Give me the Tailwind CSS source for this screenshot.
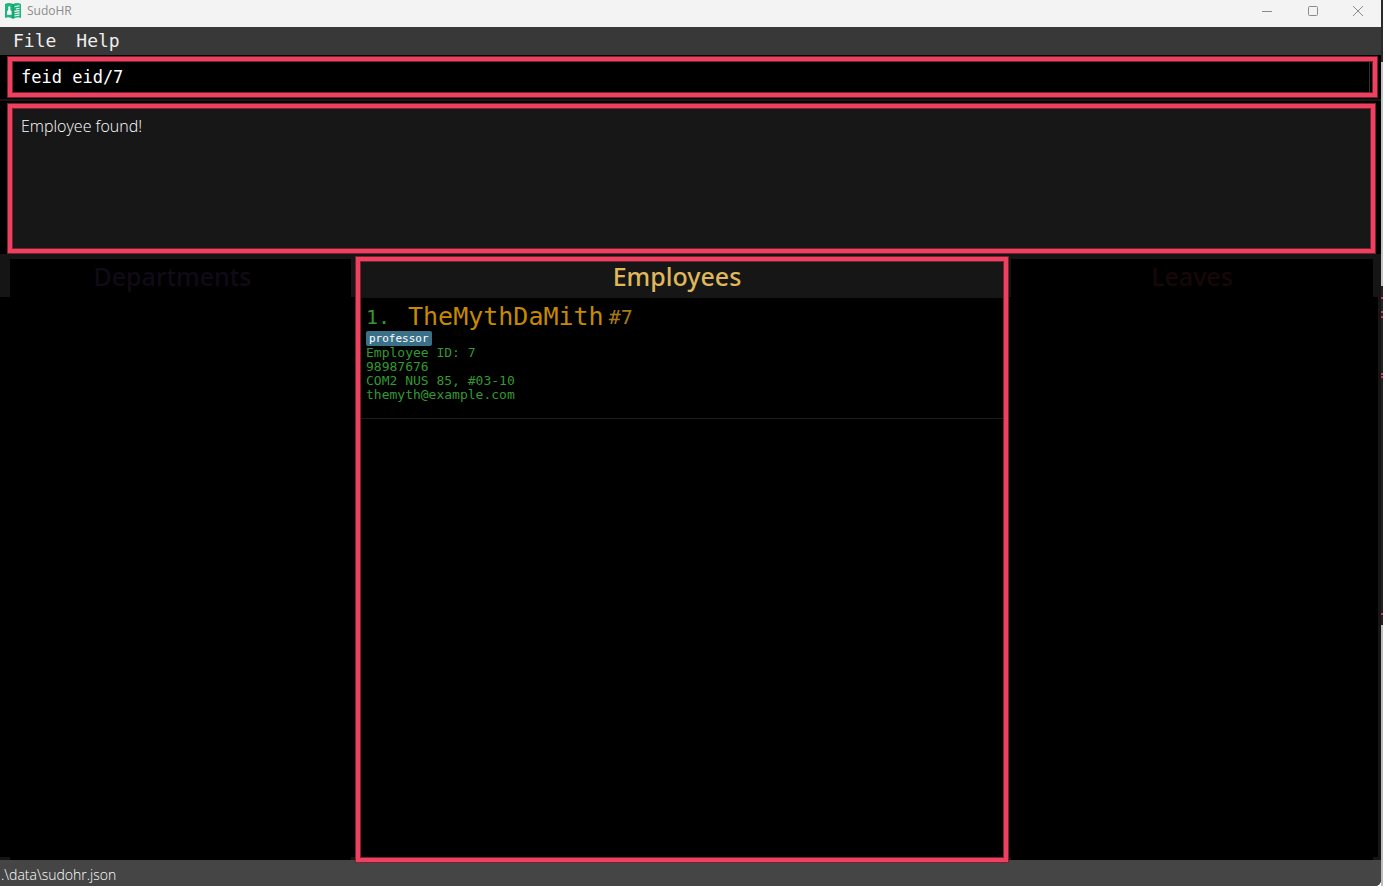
<!DOCTYPE html>
<html lang="en">
<head>
<meta charset="utf-8">
<title>SudoHR</title>
<script src="https://cdn.jsdelivr.net/npm/@tailwindcss/browser@4"></script>
</head>
<body class="flex min-h-screen bg-white pb-[3px] font-['Open_Sans',sans-serif]">
<div class="flex min-w-0 flex-1 flex-col overflow-hidden rounded-br-md bg-black">
  <header class="flex h-[27px] items-center bg-[#f3f3f3] pb-[5px] pl-1">
    <svg class="h-[18px] w-[18px]" viewBox="0 0 18 18" aria-hidden="true">
      <path d="M1 2 Q5 0 9 2 Q13 0 17 2 V16 Q13 14 9 17 Q5 14 1 16Z" fill="#1fb57c"/>
      <path d="M9 2V16" stroke="#149062" stroke-width="1"/>
      <rect x="4.3" y="4.2" width="2" height="4.5" rx="1" fill="#fff"/>
      <path d="M3 12.8V9.5L4.3 8H6.3L7.6 9.5V12.8Z" fill="#fff"/>
      <path d="M10.5 4.8 15.5 3.8M12 7 15.5 6.3M10.5 9.4 15.5 8.6M10.5 11.7 15.5 10.9M10.5 14 15.5 13" stroke="#fff" stroke-width="1.1"/>
    </svg>
    <h1 class="ml-[5px] flex-1 text-xs text-[#8c8c8c]">SudoHR</h1>
    <button aria-label="Minimize" class="flex w-[46px] justify-center"><svg class="h-3 w-3" viewBox="0 0 12 12" fill="none" stroke="#8a8a8a"><path d="M1 6.5H11"/></svg></button>
    <button aria-label="Maximize" class="flex w-[45px] justify-center"><svg class="h-3 w-3" viewBox="0 0 12 12" fill="none" stroke="#8a8a8a"><rect x="1.5" y="1.5" width="9" height="9" rx="1"/></svg></button>
    <button aria-label="Close" class="flex w-[46px] justify-center"><svg class="h-3 w-3" viewBox="0 0 12 12" fill="none" stroke="#8a8a8a"><path d="M1 1 11 11M11 1 1 11"/></svg></button>
  </header>
  <nav class="flex h-7 items-center gap-5 bg-[#383838] pl-[13px] font-['DejaVu_Sans_Mono',monospace] text-lg text-[#eeeeee]">
    <button>File</button>
    <button>Help</button>
  </nav>
  <div class="border-y-2 border-[#161616] border-t-black pr-1 pb-[2px] pl-2">
    <div class="flex h-10 border-4 border-[#ee405f] p-px pr-[3px] ring-1 ring-[#7a2233] inset-ring-1 inset-ring-[#7a2233]">
      <input aria-label="Command" value="feid eid/7" class="min-w-0 flex-1 border-r border-[#333] bg-black pt-[2px] pl-2 font-['DejaVu_Sans_Mono',monospace] text-[17px] text-white outline-none">
    </div>
  </div>
  <div class="pt-[3px] pr-[6px] pb-px pl-2">
    <output class="block h-[149px] border-4 border-[#ee405f] bg-[#171717] pt-[6px] pl-[9px] text-base leading-6 font-light text-white ring-1 ring-[#7a2233] inset-ring-1 inset-ring-[#7a2233]">Employee found!</output>
  </div>
  <main class="flex flex-1">
    <section class="flex min-w-0 flex-[356] flex-col">
      <h2 class="h-[43px] border-t-[5px] border-r-[5px] border-l-[10px] border-[#151515] bg-black pr-4 text-center font-['Noto_Sans',sans-serif] text-[25px] leading-[34px] font-medium text-[#110a17]">Departments</h2>
      <div class="flex-1"></div>
      <div class="h-[3px] border-r-[5px] border-l-[10px] border-[#151515]"></div>
    </section>
    <section class="relative z-10 -mb-[2px] flex min-w-0 flex-[652] flex-col bg-[#151515] pt-[3px]">
      <div class="flex flex-1 flex-col border-4 border-[#ee405f] bg-black p-px ring-1 ring-[#7a2233] inset-ring-1 inset-ring-[#7a2233]">
        <h2 class="h-9 bg-[#161616] pr-[10px] text-center font-['Noto_Sans',sans-serif] text-[25px] leading-7 font-medium text-[#dfb85a]">Employees</h2>
        <article class="h-[121px] border-b border-[#1c1c1c] pt-[5px] pl-[5px] font-['DejaVu_Sans_Mono',monospace] text-[13px] leading-[14px] text-[#339933]">
          <div class="flex h-7 items-center text-xl leading-7">
            <span class="w-[42px]">1.</span>
            <h3 class="text-[25px] text-[#c68a00]">TheMythDaMith</h3>
            <span class="ml-[5px] text-[#a87a18]">#7</span>
          </div>
          <div class="flex"><span class="h-[15px] rounded-xs bg-[#3b7188] px-[3px] text-[11px] leading-4 text-white">professor</span></div>
          <p>Employee ID: 7</p>
          <p>98987676</p>
          <p>COM2 NUS 85, #03-10</p>
          <p>themyth@example.com</p>
        </article>
      </div>
    </section>
    <section class="flex min-w-0 flex-[373] flex-col">
      <h2 class="h-[43px] border-t-[5px] border-r-8 border-l-[3px] border-[#151515] bg-black text-center font-['Noto_Sans',sans-serif] text-[25px] leading-[34px] font-medium text-[#170807]">Leaves</h2>
      <div class="flex-1 border-r-[3px] border-[#161616]"></div>
      <div class="h-[3px] border-r-8 border-l-[3px] border-[#151515]"></div>
    </section>
  </main>
  <footer class="h-[26px] bg-[#454545] pl-px text-sm leading-[30px] font-light text-white">.\data\sudohr.json</footer>
</div>
<div class="flex w-1 flex-col" aria-hidden="true">
  <div class="h-[62px] w-[2px] bg-[#2b2b2b]"></div>
  <div class="h-[224px] w-[2px] bg-[#c4c4c4]"></div>
  <div class="flex h-[339px] w-[2px] flex-col bg-[#222]">
    <div class="mt-[11px] h-[2px] bg-[#c93c56]"></div>
    <div class="mt-[12px] h-[2px] bg-[#c93c56]"></div>
    <div class="mt-[3px] h-[2px] bg-[#c93c56]"></div>
    <div class="mt-[55px] h-[2px] bg-[#c93c56]"></div>
    <div class="mt-[1px] h-[2px] bg-[#c93c56]"></div>
    <div class="mt-[235px] h-[2px] bg-[#c93c56]"></div>
  </div>
  <div class="w-[2px] flex-1 bg-[#bdbdbd]"></div>
</div>
</body>
</html>
